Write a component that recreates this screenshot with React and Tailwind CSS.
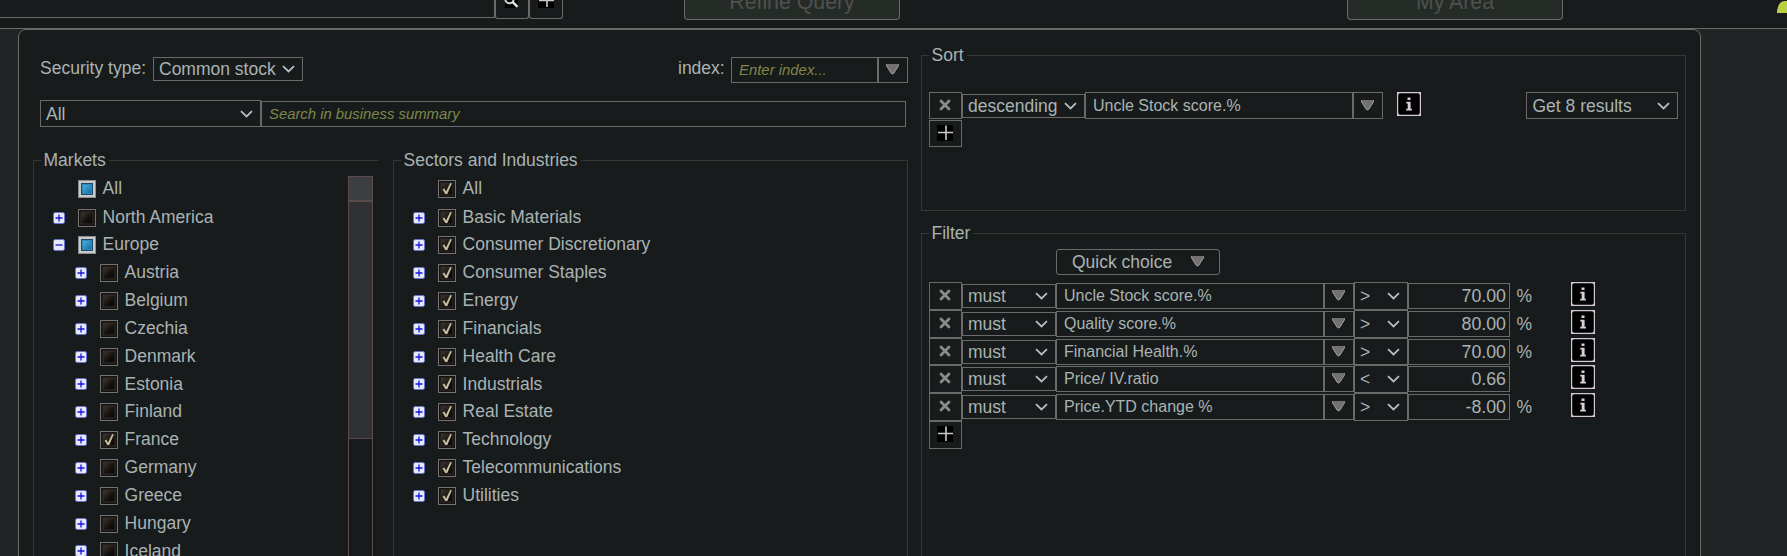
const LINE = "border-[#6b696a]";

function Chevron() {
  return (
    <svg className="shrink-0" width="13" height="8" viewBox="0 0 13 8" fill="none">
      <path d="M1 1.2 L6.5 6.4 L12 1.2" stroke="#b4bfbf" strokeWidth="1.8" />
    </svg>
  );
}

function Triangle() {
  return (
    <svg className="mr-px mb-px shrink-0" width="13" height="11" viewBox="0 0 13 11">
      <path d="M0 0 H13 V1.5 L8 9.5 Q6.5 11 5 9.5 L0 1.5 Z" fill="#727071" />
      <path d="M0.4 0.4 V1.6 L5.2 9.2 Q6.5 10.6 7.8 9.2 L12.6 1.6 V0.4" fill="none" stroke="#aaa8a9" strokeWidth="0.8" />
    </svg>
  );
}

function Cross() {
  return (
    <svg className="mr-px mb-[2px]" width="12" height="12" viewBox="0 0 12 12">
      <path d="M2 2 L10 10 M10 2 L2 10" stroke="#8d8b8a" strokeWidth="2.8" strokeLinecap="round" />
    </svg>
  );
}

function PlusBox() {
  return (
    <svg className="mr-px mb-[2px]" width="16" height="16" viewBox="0 0 16 16">
      <rect width="16" height="16" fill="#000" />
      <path d="M9 0.5 V15 M1 7.5 H16" stroke="#c9c9c9" strokeWidth="1.6" />
    </svg>
  );
}

function Info() {
  return (
    <svg className="shrink-0" width="24" height="24" viewBox="0 0 24 24">
      <rect width="24" height="24" fill="#d6c6d6" />
      <rect x="1.2" y="1.2" width="21.6" height="21.6" rx="2" fill="#000" />
      <path d="M10.5 5.5 h3 v2.6 h-3 z M9.3 9.7 h4.3 v7 h1.3 v1.8 h-5.7 v-1.8 h1.5 v-5.2 h-1.4 z" fill="#d6cfd6" />
    </svg>
  );
}

function Expander({ open }) {
  return (
    <svg className="block" width="12" height="12" viewBox="0 0 12 12">
      <rect x="0.5" y="0.5" width="11" height="11" rx="1.8" fill="#e6e9fa" stroke="#6673d0" strokeWidth="1" />
      <path d={open ? "M2.5 6 H9.5" : "M2.5 6 H9.5 M6 2.5 V9.5"} stroke="#1414e0" strokeWidth="1.3" />
    </svg>
  );
}

function Box({ state }) {
  if (state === "partial") {
    return (
      <svg className="block" width="18" height="18" viewBox="0 0 18 18">
        <defs>
          <linearGradient id="blue" x1="0" y1="0" x2="1" y2="1">
            <stop offset="0" stopColor="#3fb4e2" />
            <stop offset="1" stopColor="#1c6c9e" />
          </linearGradient>
        </defs>
        <rect width="18" height="18" fill="#8b8e90" />
        <rect x="1" y="1" width="16" height="16" fill="#c9cbcb" />
        <rect x="3" y="3" width="12" height="12" fill="#1c4a6a" />
        <rect x="4" y="4" width="10" height="10" fill="#2f87b4" />
        <rect x="5" y="5" width="8" height="8" fill="url(#blue)" />
      </svg>
    );
  }
  return (
    <svg className="block" width="18" height="18" viewBox="0 0 18 18">
      <defs>
        <linearGradient id="dark" x1="0" y1="0" x2="1" y2="1">
          <stop offset="0" stopColor="#40382f" />
          <stop offset="0.6" stopColor="#12100e" />
          <stop offset="1" stopColor="#0a0908" />
        </linearGradient>
      </defs>
      <rect x="0.5" y="0.5" width="17" height="17" fill="#161412" stroke="#767271" />
      <rect x="3" y="3" width="12" height="12" fill="url(#dark)" stroke="#302d2a" />
      {state === "checked" && (
        <path d="M4.6 9.6 L6.4 8.6 L8 11.4 L12.2 3 L13.8 3.6 L9.3 14 H7.2 Z" fill="#c9bda0" />
      )}
    </svg>
  );
}

function TreeRow({ label, state, expander, nested, first }) {
  return (
    <div className={`flex items-center ${first ? "h-[28.6px]" : "h-[27.83px]"} ${nested ? "pl-[22px]" : ""}`}>
      <div className="w-3">{expander && <Expander open={expander === "open"} />}</div>
      <div className="ml-[13px]"><Box state={state} /></div>
      <span className="-mt-[1.8px] ml-[6.6px] whitespace-nowrap leading-5">{label}</span>
    </div>
  );
}

function Select({ label, className }) {
  return (
    <div className={`flex shrink-0 items-center justify-between border ${LINE} ${className}`}>
      <span className="whitespace-nowrap leading-5">{label}</span>
      <Chevron />
    </div>
  );
}

function Combo({ label, className }) {
  return (
    <div className={`flex w-[298px] shrink-0 ${className}`}>
      <div className={`flex w-[268px] items-center border pl-[7px] text-[16px] ${LINE}`}>
        <span className="whitespace-nowrap leading-[18px]">{label}</span>
      </div>
      <div className={`flex w-[30px] items-center justify-center border ${LINE}`}><Triangle /></div>
    </div>
  );
}

function IconButton({ children, className }) {
  return (
    <div className={`flex w-[33px] shrink-0 items-center justify-center border ${LINE} ${className}`}>{children}</div>
  );
}

const countries = [
  "Austria", "Belgium", "Czechia", "Denmark", "Estonia", "Finland",
  "France", "Germany", "Greece", "Hungary", "Iceland",
];

const sectors = [
  "Basic Materials", "Consumer Discretionary", "Consumer Staples", "Energy", "Financials",
  "Health Care", "Industrials", "Real Estate", "Technology", "Telecommunications", "Utilities",
];

const filters = [
  { name: "Uncle Stock score.%", op: ">", value: "70.00", unit: "%" },
  { name: "Quality score.%", op: ">", value: "80.00", unit: "%" },
  { name: "Financial Health.%", op: ">", value: "70.00", unit: "%" },
  { name: "Price/ IV.ratio", op: "<", value: "0.66", unit: "" },
  { name: "Price.YTD change %", op: ">", value: "-8.00", unit: "%" },
];

function Header() {
  return (
    <header className={`flex h-[29px] items-start overflow-hidden border-b bg-[#181b1c] ${LINE}`}>
      <div className={`h-[18px] w-[495px] border-r border-b ${LINE}`} />
      <div className={`flex h-[19px] w-[34px] items-start justify-center rounded-b-[3px] border border-t-0 ${LINE}`}>
        <svg width="16" height="8" viewBox="0 0 16 8">
          <rect x="1" width="13" height="8" fill="#000" />
          <circle cx="5.5" cy="-1" r="4.2" fill="none" stroke="#cfcfcf" strokeWidth="2" />
          <path d="M8.5 1.8 L13.5 6.8" stroke="#e2e2e2" strokeWidth="2.4" />
        </svg>
      </div>
      <div className={`flex h-[19px] w-[34px] items-start justify-center rounded-b-[3px] border border-t-0 ${LINE}`}>
        <svg width="16" height="8" viewBox="0 0 16 8">
          <rect width="16" height="8" fill="#000" />
          <path d="M9 0 V7 M1 0.5 H16" stroke="#c9c9c9" strokeWidth="1.6" />
        </svg>
      </div>
      <div className={`ml-[121px] flex h-5 w-[216px] items-end justify-center rounded-b-[4px] border border-t-0 bg-[#252b27] ${LINE}`}>
        <span className="whitespace-nowrap pb-[5px] text-[21.3px] leading-6 text-[#50504e]">Refine Query</span>
      </div>
      <div className={`ml-[447px] flex h-5 w-[216px] items-end justify-center rounded-b-[4px] border border-t-0 bg-[#252b27] ${LINE}`}>
        <span className="whitespace-nowrap pb-[5px] text-[21.3px] leading-6 text-[#50504e]">My Area</span>
      </div>
      <svg className="ml-[214px] shrink-0" width="10" height="13" viewBox="0 0 10 13">
        <path d="M0 13 V10.5 Q0.8 5 3.8 2.2 Q6 0.6 10 1 V13 Z" fill="#b9cf45" />
      </svg>
    </header>
  );
}

export default function App() {
  return (
    <div className="h-[556px] w-[1787px] overflow-hidden bg-[#222526] font-['Liberation_Sans',Arial,sans-serif] text-[17.5px] text-[#a9b3b3]">
      <Header />
      <main className={`ml-[18px] flex h-[560px] w-[1683px] rounded-t-[8px] border bg-[#181b1c] ${LINE}`}>
        <section className="ml-[14px] w-[875px] shrink-0">
          <div className="ml-[7px] flex pt-[27px]">
            <span className="w-[113px] whitespace-nowrap pt-px leading-5">Security type:</span>
            <Select label="Common stock" className="h-6 w-[150px] pr-[7px] pl-[5px]" />
            <span className="ml-[375px] w-[53px] whitespace-nowrap pt-px leading-5">index:</span>
            <div className={`flex h-[26px] w-[147px] items-center border pl-[7px] text-[14.9px] italic text-[#7d8748] ${LINE}`}>Enter index...</div>
            <div className={`flex h-[26px] w-[30px] items-center justify-center border ${LINE}`}><Triangle /></div>
          </div>
          <div className="mt-[17px] ml-[7px] flex items-end">
            <Select label="All" className="h-[27px] w-[221px] pr-[7px] pl-[5px]" />
            <div className={`flex h-[26px] w-[645px] items-center border pl-[7px] text-[14.85px] italic text-[#7d8748] ${LINE}`}>Search in business summary</div>
          </div>
          <div className="mt-[23px] flex">
            <fieldset className="h-[430px] w-[346px] border border-r-0 border-[#343736]">
              <legend className="ml-[7px] pr-[3px] pl-[2.5px] leading-5">Markets</legend>
              <div className="flex justify-between pr-[6px]">
                <div className="pt-[5px] pl-[19px]">
                  <TreeRow label="All" state="partial" first />
                  <TreeRow label="North America" state="empty" expander="closed" />
                  <TreeRow label="Europe" state="partial" expander="open" />
                  {countries.map((c) => (
                    <TreeRow key={c} label={c} state={c === "France" ? "checked" : "empty"} expander="closed" nested />
                  ))}
                </div>
                <div className="mt-[6px] h-[400px] w-[25px] border border-[#5a4b4b]">
                  <div className="h-6 border-b border-[#5a4b4b] bg-[#3c3f41]" />
                  <div className="h-[238px] border-y border-[#5a4b4b] bg-[#303135]" />
                </div>
              </div>
            </fieldset>
            <fieldset className="ml-[14px] h-[430px] w-[515px] border border-[#343736]">
              <legend className="ml-[7px] pr-[3px] pl-[2.5px] leading-5">Sectors and Industries</legend>
              <div className="pt-[5px] pl-[19px]">
                <TreeRow label="All" state="checked" first />
                {sectors.map((s) => (
                  <TreeRow key={s} label={s} state="checked" expander="closed" />
                ))}
              </div>
            </fieldset>
          </div>
        </section>
        <section className="ml-[13px] w-[765px] shrink-0 pt-[15px]">
          <fieldset className="h-[166px] border border-[#343736]">
            <legend className="ml-[7px] pr-[3px] pl-[2.5px] leading-5">Sort</legend>
            <div className="flex items-start pt-[27px] pl-[7px]">
              <IconButton className="h-[27px]"><Cross /></IconButton>
              <Select label="descending" className="mt-[2px] h-6 w-[123px] pr-[7px] pl-[5px]" />
              <Combo label="Uncle Stock score.%" className="h-[27px]" />
              <div className="ml-[14px]"><Info /></div>
              <Select label="Get 8 results" className="ml-[105px] h-[27px] w-[152px] pr-[7px] pl-[5.5px]" />
            </div>
            <div className="pt-px pl-[7px]">
              <IconButton className="h-[27px]"><PlusBox /></IconButton>
            </div>
          </fieldset>
          <fieldset className="mt-3 h-[380px] border border-[#343736]">
            <legend className="ml-[7px] pr-[3px] pl-[2.5px] leading-5">Filter</legend>
            <div className={`mt-[6px] ml-[134px] flex h-[26px] w-[164px] items-center justify-between rounded-[3px] border pr-[14px] pl-[15px] ${LINE}`}>
              <span className="whitespace-nowrap leading-5">Quick choice</span>
              <Triangle />
            </div>
            <div className="pt-[7px] pl-[7px]">
              {filters.map((f) => (
                <div key={f.name} className="flex h-[27.83px] items-start">
                  <IconButton className="h-[27.83px]"><Cross /></IconButton>
                  <Select label="must" className="mt-[2px] h-6 w-[94px] pr-[7px] pl-[5px]" />
                  <Combo label={f.name} className="mt-px h-[26px]" />
                  <Select label={f.op} className="h-[27.83px] w-[54px] pr-[7px] pl-[5px]" />
                  <div className={`mt-px flex h-[26px] w-[102px] items-center justify-end border pr-[3px] text-[17.8px] ${LINE}`}>
                    <span className="leading-5">{f.value}</span>
                  </div>
                  <span className="mt-[4px] ml-[6.5px] w-[54.5px] leading-5">{f.unit}</span>
                  <Info />
                </div>
              ))}
              <IconButton className="h-[27.83px]"><PlusBox /></IconButton>
            </div>
          </fieldset>
        </section>
      </main>
    </div>
  );
}
